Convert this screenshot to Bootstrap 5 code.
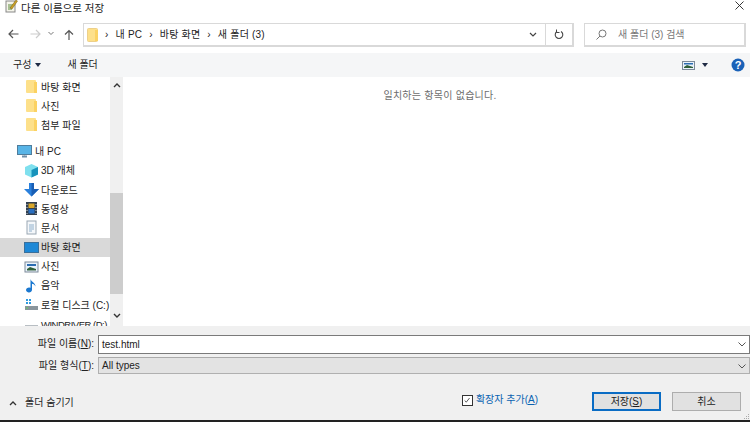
<!DOCTYPE html>
<html lang="ko">
<head>
<meta charset="utf-8">
<title>다른 이름으로 저장</title>
<link rel="stylesheet" href="https://cdn.jsdelivr.net/npm/bootstrap@5.3.0/dist/css/bootstrap.min.css">
<style>
html,body{margin:0;height:422px;overflow:hidden;background:#fff}
body{font-family:"Liberation Sans","Noto Sans CJK KR",sans-serif;font-size:10px;line-height:12px;color:#222}
.dlg{width:750px;height:422px;border-bottom:2px solid #222;overflow:hidden}
.titlebar{height:17px;padding-left:5px;gap:3px;font-size:10.500px}
.titlebar svg{margin-top:-6px}
.titlebar span{margin-top:-2px}
.xbtn{margin-left:auto;margin-right:6px}
.navrow{height:36px;padding-top:6px;align-items:flex-start}
.navbtn{width:23px;text-align:center;height:24px;padding-top:5px}
.crumbbox{width:491px;height:24px;margin-left:3px;border:1px solid #d9d9d9;border-width:1px 2px 2px 1px}
.crumb{gap:7px;padding-left:3px;font-size:10px;letter-spacing:.2px}
.crumb i{font-style:normal}
.refresh{width:27px;border-left:1px solid #d9d9d9}
.searchbox{width:162px;height:24px;margin-left:10px;border:1px solid #d9d9d9;border-width:1px 2px 2px 1px;color:#777;padding-left:11px;gap:11px}
.toolbar{height:24px;background:#f5f6f7;padding-left:13px;padding-right:5px}
.toolgap{margin-left:26px}
.caret{width:0;height:0;border-left:3.5px solid transparent;border-right:3.5px solid transparent;border-top:4px solid #1f2a44;display:inline-block}
.viewcaret{margin-left:7px}
.helpic{margin-left:23px}
.mainarea{height:249px}
.tree{width:110px;overflow:hidden}
.treerow{height:19.2px;padding-left:24px;gap:2px;white-space:nowrap;flex:none}
.treerow span{padding-top:2px}
.treerow.top{padding-left:17px;margin-top:7px;gap:3px}
.treerow.sel{background:#d9d9d9}
.treerow .tight{letter-spacing:-.5px;font-size:9.500px}
.ic{width:15px;height:15px;flex:none;display:block}
.vbar{width:13px;background:#f0f0f0;position:relative;flex:none}
.vthumb{height:101px;margin-top:116px;background:#cdcdcd}
.vbtn{position:absolute;left:0;width:13px;text-align:center;height:16px}
.vbtn.up{top:2px}
.vbtn.dn{bottom:0}
.emptyview{color:#6d6d6d;padding-top:13px;text-align:center;flex-grow:1;padding-left:7px;letter-spacing:.25px}
.footerzone{height:94px;background:#f0f0f0;padding-top:9px;position:relative}
.frow{margin-bottom:3px}
.flabel{width:94px;text-align:right;font-size:10px;white-space:nowrap;line-height:18px;flex:none}
.fbox{width:653px;height:19px;margin-left:4px;border:1px solid #7a7a7a;background:#fff;padding-left:3px;font-size:10px;line-height:17px;position:relative}
.fbox.gray{height:17px;line-height:15px;background:#e3e3e3;border-color:#b0b0b0;border-top-color:#aaa}
.fchev{position:absolute;right:3px;top:6px}
.actions{margin-top:15px;height:22px;padding-left:9px}
.hidefold{gap:8px;margin-right:auto;margin-top:3px}
.ext{color:#0a63b0;gap:3px;margin-right:54px;margin-top:-2px}
.chk{width:11px;height:11px;border:1px solid #333;background:#fff;display:block}
.winbtn{width:69px;height:19px;border:1px solid #adadad;background:#e1e1e1;text-align:center;line-height:17px;font-size:10px;color:#222}
.winbtn.def{border:2px solid #0a6cc4;line-height:15px;margin-right:11px}
.winbtn.last{margin-right:9px}
.grip{position:absolute;right:1px;bottom:1px}
u{text-decoration:underline}
</style>
</head>
<body>
<div class="dlg d-flex flex-column">
  <div class="titlebar d-flex align-items-center">
    <svg width="13" height="14" viewBox="0 0 13 14"><rect x="1" y="2" width="9" height="11" fill="#f4f4ea" stroke="#888"/><path d="M3 6h5M3 8h5M3 10h4" stroke="#5a8a3a"/><path d="M5 9 11 1l1.500 1L7 10z" fill="#c9a227" stroke="#7a5a10" stroke-width=".5"/></svg>
    <span>다른 이름으로 저장</span>
    <svg class="xbtn" width="9" height="9" viewBox="0 0 9 9"><path d="M.5.500l8 8M8.500.500l-8 8" stroke="#222" stroke-width=".9"/></svg>
  </div>
  <div class="navrow d-flex">
    <div class="navbtn" style="margin-left:2px"><svg width="11" height="10" viewBox="0 0 11 10"><path d="M10.500 5H1M5 1 1 5l4 4" fill="none" stroke="#555" stroke-width="1.200"/></svg></div>
    <div class="navbtn" style="width:20px"><svg width="11" height="10" viewBox="0 0 11 10"><path d="M.5 5H10M6 1l4 4-4 4" fill="none" stroke="#ccc" stroke-width="1.200"/></svg></div>
    <div class="navbtn" style="width:12px"><svg width="6" height="10" viewBox="0 0 6 10"><path d="M.5 3 3 5.500 5.500 3" fill="none" stroke="#777"/></svg></div>
    <div class="navbtn" style="width:23px"><svg width="10" height="11" viewBox="0 0 10 11"><path d="M5 11V1.500M1 5.500l4-4 4 4" fill="none" stroke="#555" stroke-width="1.200"/></svg></div>
    <div class="crumbbox d-flex align-items-center">
      <div class="crumb d-flex align-items-center flex-grow-1">
        <svg width="11" height="14" viewBox="0 0 11 14"><rect x=".5" y=".5" width="10" height="13" rx="1" fill="#fde08a" stroke="#edd08a"/><rect x="8" y="2" width="3" height="11" fill="#fbd263"/></svg>
        <i>›</i><span>내 PC</span><i>›</i><span>바탕 화면</span><i>›</i><span>새 폴더 (3)</span>
      </div>
      <svg width="8" height="6" viewBox="0 0 8 6" class="me-2"><path d="M1 1l3 3 3-3" fill="none" stroke="#444" stroke-width="1.200"/></svg>
      <div class="refresh d-flex align-items-center justify-content-center h-100"><svg width="10" height="11" viewBox="0 0 10 11"><path d="M3 2.500a3.800 3.800 0 1 0 4 0" fill="none" stroke="#444" stroke-width="1.100"/><path d="M2.500 0.500v3h3" fill="none" stroke="#444"/></svg></div>
    </div>
    <div class="searchbox d-flex align-items-center">
      <svg width="11" height="11" viewBox="0 0 11 11"><circle cx="6.500" cy="4.500" r="3.500" fill="none" stroke="#777"/><path d="M4 7 .5 10.500" stroke="#777"/></svg>
      <span>새 폴더 (3) 검색</span>
    </div>
  </div>
  <div class="toolbar d-flex align-items-center">
    <span class="me-1">구성</span><span class="caret"></span>
    <span class="toolgap">새 폴더</span>
    <svg class="ms-auto" width="13" height="9" viewBox="0 0 13 9"><rect x=".5" y=".5" width="12" height="8" fill="#eaf2fb" stroke="#7d8a99"/><path d="M2 6l3-2 6 2v1H2z" fill="#2f5f3a"/><rect x="2" y="2" width="9" height="1.500" fill="#2c6db2"/></svg>
    <span class="caret viewcaret"></span>
    <svg class="helpic" width="14" height="14" viewBox="0 0 14 14"><circle cx="7" cy="7" r="6.500" fill="#1a62b8"/><text x="7" y="11" text-anchor="middle" font-size="11" font-weight="700" fill="#fff" font-family="Liberation Sans">?</text></svg>
  </div>
  <div class="mainarea d-flex">
    <div class="tree d-flex flex-column">
      <div class="treerow d-flex align-items-center"><svg class="ic" viewBox="0 0 15 15"><use href="#fld"/></svg><span>바탕 화면</span></div>
      <div class="treerow d-flex align-items-center"><svg class="ic" viewBox="0 0 15 15"><use href="#fld"/></svg><span>사진</span></div>
      <div class="treerow d-flex align-items-center"><svg class="ic" viewBox="0 0 15 15"><use href="#fld"/></svg><span>첨부 파일</span></div>
      <div class="treerow top d-flex align-items-center"><svg class="ic" viewBox="0 0 15 15"><rect x=".5" y="1.500" width="14" height="9" fill="#58b4e6" stroke="#4f7d9c"/><path d="M5 12.500h5" stroke="#6f8fa8" stroke-width="2"/><path d="M7.500 11v1" stroke="#9fb2c0"/></svg><span>내 PC</span></div>
      <div class="treerow d-flex align-items-center"><svg class="ic" viewBox="0 0 15 15"><path d="M7.500 1 14 4v7.500L7.500 14.500 1 11.500V4z" fill="#7fe0ee"/><path d="M7.500 7v7.500L14 11.500V4z" fill="#1793bb"/></svg><span>3D 개체</span></div>
      <div class="treerow d-flex align-items-center"><svg class="ic" viewBox="0 0 15 15"><path d="M5 1h5v6h5l-7.500 7.500L0 7h5z" fill="#2a80dc"/><path d="M7.500 1h2.500v6h5l-7.500 7.500z" fill="#1a5fb4"/></svg><span>다운로드</span></div>
      <div class="treerow d-flex align-items-center"><svg class="ic" viewBox="0 0 15 15"><rect x="2" y="1" width="11" height="13" fill="#33404f"/><rect x="4.500" y="2.500" width="6" height="4.500" fill="#d9a72b"/><rect x="4.500" y="8" width="6" height="4.500" fill="#2a6fc0"/><path d="M3 3v1M3 6v1M3 9v1M3 12v1M12 3v1M12 6v1M12 9v1M12 12v1" stroke="#cfd6dc"/></svg><span>동영상</span></div>
      <div class="treerow d-flex align-items-center"><svg class="ic" viewBox="0 0 15 15"><rect x="3" y="1" width="9" height="13" fill="#f4f7fa" stroke="#9aa7b3"/><path d="M5 5h5M5 7h5M5 9h5M5 11h3" stroke="#8fb0cc"/></svg><span>문서</span></div>
      <div class="treerow sel d-flex align-items-center"><svg class="ic" viewBox="0 0 15 15"><rect x=".5" y="2.500" width="14" height="10" fill="#1e88d6" stroke="#3a6f9a"/></svg><span>바탕 화면</span></div>
      <div class="treerow d-flex align-items-center"><svg class="ic" viewBox="0 0 15 15"><rect x="1" y="3" width="13" height="10" fill="#eaf2fb" stroke="#7d8a99"/><path d="M3 10l3-2 6 2v1.500H3z" fill="#2f5f3a"/><rect x="3" y="5" width="9" height="2" fill="#2c6db2"/></svg><span>사진</span></div>
      <div class="treerow d-flex align-items-center"><svg class="ic" viewBox="0 0 15 15"><path d="M6.500 1c1 3.500 5 3.500 5 7.500-1-2-2.500-2.700-3.500-2.700v6a3 2.500 0 1 1-1.500-2z" fill="#1b78d0"/></svg><span>음악</span></div>
      <div class="treerow d-flex align-items-center"><svg class="ic" viewBox="0 0 15 15"><path d="M2 2h2v2H2zM5 2h2v2H5zM2 5h2v2H2zM5 5h2v2H5z" fill="#2f9be0"/><rect x="1" y="9" width="13" height="4" fill="#8a959c"/><rect x="2" y="10.500" width="2" height="1" fill="#5fd35f"/></svg><span>로컬 디스크 (C:)</span></div>
      <div class="treerow d-flex align-items-center"><svg class="ic" viewBox="0 0 15 15"><rect x="1" y="9" width="13" height="5" fill="#b8bec3"/></svg><span class="tight">WINDRIVER (D:)</span></div>
    </div>
    <div class="vbar">
      <div class="vbtn up"><svg width="8" height="6" viewBox="0 0 8 6"><path d="M1 5l3-3 3 3" fill="none" stroke="#333" stroke-width="1.400"/></svg></div>
      <div class="vthumb"></div>
      <div class="vbtn dn"><svg width="8" height="6" viewBox="0 0 8 6"><path d="M1 1l3 3 3-3" fill="none" stroke="#333" stroke-width="1.400"/></svg></div>
    </div>
    <div class="emptyview">일치하는 항목이 없습니다.</div>
  </div>
  <div class="footerzone">
    <div class="frow d-flex">
      <div class="flabel">파일 이름(<u>N</u>):</div>
      <div class="fbox">test.html<svg class="fchev" width="8" height="5" viewBox="0 0 8 5"><path d="M.5.500 4 4 7.500.500" fill="none" stroke="#555"/></svg></div>
    </div>
    <div class="frow d-flex">
      <div class="flabel">파일 형식(<u>T</u>):</div>
      <div class="fbox gray">All types<svg class="fchev" width="8" height="5" viewBox="0 0 8 5"><path d="M.5.500 4 4 7.500.500" fill="none" stroke="#555"/></svg></div>
    </div>
    <div class="actions d-flex align-items-center">
      <div class="hidefold d-flex align-items-center"><svg width="8" height="6" viewBox="0 0 8 6"><path d="M1 5l3-3 3 3" fill="none" stroke="#333" stroke-width="1.300"/></svg><span>폴더 숨기기</span></div>
      <div class="ext d-flex align-items-center"><svg class="chk" viewBox="0 0 11 11"><path d="M2 5.500l2 2 4-5" fill="none" stroke="#333"/></svg><span>확장자 추가(<u>A</u>)</span></div>
      <div class="winbtn def">저장(<u>S</u>)</div>
      <div class="winbtn last">취소</div>
    </div>
    <svg class="grip" width="5" height="5" viewBox="0 0 5 5"><path d="M4 0h1v1H4zM2 2h1v1H2zM4 2h1v1H4zM0 4h1v1H0zM2 4h1v1H2zM4 4h1v1H4z" fill="#aaa"/></svg>
  </div>
</div>
<svg width="0" height="0" class="position-absolute"><defs><g id="fld"><rect x="2" y="1" width="10" height="13" rx="1" fill="#fde08a"/><rect x="10" y="3" width="3" height="11" fill="#fbd263"/></g></defs></svg>
<script src="https://cdn.jsdelivr.net/npm/bootstrap@5.3.0/dist/js/bootstrap.bundle.min.js"></script>
</body>
</html>
